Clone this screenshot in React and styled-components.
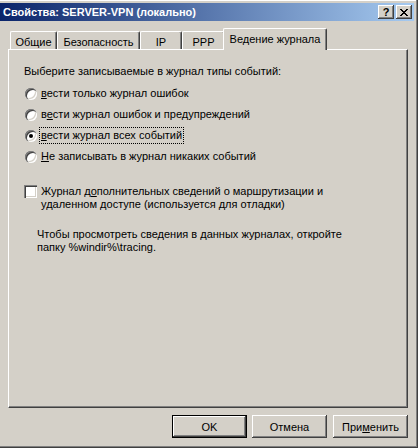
import React from "react"
import styled, { createGlobalStyle } from "styled-components"

const GlobalStyle = createGlobalStyle`
  body {
    margin: 0;
    background: #d4d0c8;
    font-family: "Liberation Sans", Arial, sans-serif;
    font-size: 11px;
    color: #000;
  }
`

const Window = styled.div`
  width: 418px;
  height: 448px;
  box-sizing: border-box;
  padding: 3px 4px 4px 0;
  display: flex;
  flex-direction: column;
  background: #d4d0c8;
  box-shadow: inset -1px -1px 0 #404040, inset -2px -2px 0 #808080,
    inset 0 1px 0 #ffffff;
`

const TitleBar = styled.div`
  height: 18px;
  display: flex;
  align-items: center;
  padding: 0 2px 0 3px;
  background: linear-gradient(to right, #0a246a, #a6caf0);
  color: #fff;
  font-weight: bold;
  font-size: 11px;
`

const Caption = styled.span`
  flex: 1;
  white-space: nowrap;
`

const CaptionButtons = styled.div`
  display: flex;
  gap: 2px;
`

const CaptionButton = styled.div`
  width: 16px;
  height: 14px;
  box-sizing: border-box;
  display: flex;
  align-items: center;
  justify-content: center;
  background: #d4d0c8;
  color: #000;
  font-weight: bold;
  font-size: 11px;
  line-height: 14px;
  box-shadow: inset -1px -1px 0 #404040, inset 1px 1px 0 #ffffff,
    inset -2px -2px 0 #808080;
`

const Body = styled.div`
  flex: 1;
  display: flex;
  flex-direction: column;
  padding: 7px 6px 0 8px;
`

const TabStrip = styled.div`
  height: 21px;
  display: flex;
  align-items: flex-end;
  padding-left: 2px;
  position: relative;
  z-index: 1;
`

const Tab = styled.div`
  width: ${(p) => p.$width}px;
  height: ${(p) => (p.$active ? 22 : 18)}px;
  margin: 0 ${(p) => (p.$active ? -2 : 0)}px ${(p) => (p.$active ? -1 : 0)}px;
  box-sizing: border-box;
  padding-top: 4px;
  line-height: 13px;
  text-align: center;
  white-space: nowrap;
  background: #d4d0c8;
  border-top: 1px solid #fff;
  border-left: 1px solid #fff;
  border-right: 1px solid #404040;
  border-radius: 2px 2px 0 0;
  box-shadow: inset -1px 0 0 #808080;
  position: relative;
  z-index: ${(p) => (p.$active ? 2 : 0)};
`

const Panel = styled.div`
  flex: 1;
  box-sizing: border-box;
  border-top: 1px solid #fff;
  border-left: 1px solid #fff;
  border-right: 1px solid #404040;
  border-bottom: 1px solid #404040;
  box-shadow: inset -1px -1px 0 #808080;
  padding: 15px 0 0 15px;
  display: flex;
  flex-direction: column;
`

const Heading = styled.div`
  line-height: 13px;
`

const RadioList = styled.div`
  margin-top: 5px;
  display: grid;
  grid-auto-rows: 21px;
`

const OptionRow = styled.label`
  display: flex;
  align-items: center;
  gap: 4px;
  padding-left: 1px;
`

const Radio = styled.span`
  width: 12px;
  height: 12px;
  flex: none;
  border-radius: 50%;
  background: #fff;
  display: flex;
  align-items: center;
  justify-content: center;
  box-shadow: inset 1px 1px 0 #808080, inset 2px 2px 0 #404040,
    inset -1px -1px 0 #ffffff, inset -2px -2px 0 #d4d0c8;

  &::after {
    content: "";
    width: 4px;
    height: 4px;
    border-radius: 50%;
    background: ${(p) => (p.$checked ? "#000" : "transparent")};
  }
`

const Label = styled.span`
  line-height: 13px;
  padding: 1px 1px;
  margin-left: -1px;
  white-space: nowrap;
  outline: ${(p) => (p.$focused ? "1px dotted #000" : "none")};
  outline-offset: 0;
`

const CheckRow = styled.label`
  margin-top: 18px;
  display: flex;
  align-items: flex-start;
  gap: 4px;
`

const Checkbox = styled.span`
  width: 13px;
  height: 13px;
  flex: none;
  margin-top: 0;
  background: #fff;
  box-shadow: inset 1px 1px 0 #808080, inset 2px 2px 0 #404040,
    inset -1px -1px 0 #ffffff, inset -2px -2px 0 #d4d0c8;
`

const CheckText = styled.span`
  line-height: 13px;
`

const Info = styled.div`
  margin: 17px 0 0 13px;
  line-height: 13px;
`

const Footer = styled.div`
  height: 36px;
  box-sizing: border-box;
  padding-top: 7px;
  display: flex;
  justify-content: flex-end;
  gap: 5px;
`

const Button = styled.button`
  width: 75px;
  height: 23px;
  padding: 0;
  font-family: inherit;
  font-size: 11px;
  color: #000;
  background: #d4d0c8;
  border: ${(p) => (p.$default ? "1px solid #000" : "none")};
  box-shadow: inset -1px -1px 0 #404040, inset 1px 1px 0 #ffffff,
    inset -2px -2px 0 #808080;
  margin-left: ${(p) => p.$gap || 0}px;
`

const U = styled.span`
  text-decoration: underline;
`

const CloseGlyph = () => (
  <svg width="8" height="7" viewBox="0 0 8 7" shapeRendering="crispEdges">
    <path d="M0 0h2v1H0zM6 0h2v1H6zM1 1h2v1H1zM5 1h2v1H5zM2 2h4v1H2zM3 3h2v1H3zM2 4h4v1H2zM1 5h2v1H1zM5 5h2v1H5zM0 6h2v1H0zM6 6h2v1H6z" fill="#000" />
  </svg>
)

const tabs = [
  { label: "Общие", width: 47 },
  { label: "Безопасность", width: 83 },
  { label: "IP", width: 42 },
  { label: "PPP", width: 43 },
  { label: "Ведение журнала", width: 104, active: true },
]

export default function App() {
  return (
    <>
      <GlobalStyle />
      <Window>
        <TitleBar>
          <Caption>Свойства: SERVER-VPN (локально)</Caption>
          <CaptionButtons>
            <CaptionButton>?</CaptionButton>
            <CaptionButton>
              <CloseGlyph />
            </CaptionButton>
          </CaptionButtons>
        </TitleBar>

        <Body>
          <TabStrip>
            {tabs.map((t) => (
              <Tab key={t.label} $width={t.width} $active={t.active}>
                {t.label}
              </Tab>
            ))}
          </TabStrip>

          <Panel>
            <Heading>Выберите записываемые в журнал типы событий:</Heading>

            <RadioList>
              <OptionRow>
                <Radio />
                <Label>
                  <U>в</U>ести только журнал ошибок
                </Label>
              </OptionRow>
              <OptionRow>
                <Radio />
                <Label>
                  в<U>е</U>сти журнал ошибок и предупреждений
                </Label>
              </OptionRow>
              <OptionRow>
                <Radio $checked />
                <Label $focused>
                  <U>в</U>ести журнал всех событий
                </Label>
              </OptionRow>
              <OptionRow>
                <Radio />
                <Label>
                  <U>Н</U>е записывать в журнал никаких событий
                </Label>
              </OptionRow>
            </RadioList>

            <CheckRow>
              <Checkbox />
              <CheckText>
                Журнал д<U>о</U>полнительных сведений о маршрутизации и
                <br />
                удаленном доступе (используется для отладки)
              </CheckText>
            </CheckRow>

            <Info>
              Чтобы просмотреть сведения в данных журналах, откройте
              <br />
              папку %windir%\tracing.
            </Info>
          </Panel>

          <Footer>
            <Button $default>OK</Button>
            <Button>Отмена</Button>
            <Button $gap={1}>
              При<U>м</U>енить
            </Button>
          </Footer>
        </Body>
      </Window>
    </>
  )
}
